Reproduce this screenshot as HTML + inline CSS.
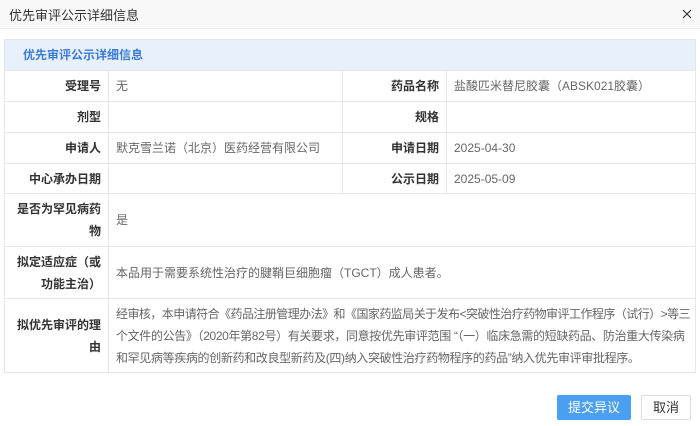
<!DOCTYPE html><html><head><meta charset="utf-8"><style>
body{margin:0;width:700px;height:426px;background:#fff;font-family:"Liberation Sans","Noto Sans CJK SC",sans-serif;font-size:12px;color:#666;position:relative;overflow:hidden}
.hd{position:absolute;left:0;top:0;width:700px;height:28px;background:#f8f8f8;border-bottom:1px solid #eee}
.hd span{position:absolute;left:9px;top:5px;font-size:13px;color:#333}
.hd svg{position:absolute;right:8px;top:9px}
table{position:absolute;left:4px;top:39px;width:692px;border-collapse:collapse;table-layout:fixed}
td{border:1px solid #e6e6e6;padding:0 7px;line-height:22px;vertical-align:middle;overflow:hidden}
td.l{text-align:right;font-weight:bold;color:#333;padding-right:7px}
tr.t td{background:#e8f0fb;color:#3a7bd5;font-weight:bold;height:30px;padding-left:18px}
.nw{white-space:nowrap;letter-spacing:-0.35px}
.nw span{letter-spacing:-0.55px}
.btn{position:absolute;top:395px;height:25px;line-height:25px;text-align:center;font-size:13px;border-radius:2px}
</style></head><body>
<div class="hd"><span>优先审评公示详细信息</span><svg width="10" height="10" viewBox="0 0 10 10"><path d="M1 1L9 9M9 1L1 9" stroke="#333" stroke-width="1.2"/></svg></div>
<table>
<col style="width:104px"><col style="width:234px"><col style="width:104px"><col>
<tr class="t"><td colspan="4">优先审评公示详细信息</td></tr>
<tr style="height:31px"><td class="l">受理号</td><td>无</td><td class="l">药品名称</td><td>盐酸匹米替尼胶囊（ABSK021胶囊）</td></tr>
<tr style="height:31px"><td class="l">剂型</td><td></td><td class="l">规格</td><td></td></tr>
<tr style="height:31px"><td class="l">申请人</td><td>默克雪兰诺（北京）医药经营有限公司</td><td class="l">申请日期</td><td>2025-04-30</td></tr>
<tr style="height:30px"><td class="l">中心承办日期</td><td></td><td class="l">公示日期</td><td>2025-05-09</td></tr>
<tr style="height:53px"><td class="l">是否为罕见病药物</td><td colspan="3">是</td></tr>
<tr style="height:52px"><td class="l">拟定适应症（或功能主治）</td><td colspan="3">本品用于需要系统性治疗的腱鞘巨细胞瘤（TGCT）成人患者。</td></tr>
<tr style="height:74px"><td class="l">拟优先审评的理由</td><td colspan="3" class="nw"><span>经审核，本申请符合《药品注册管理办法》和《国家药监局关于发布&lt;突破性治疗药物审评工作程序（试行）&gt;等三</span><br>个文件的公告》（2020年第82号）有关要求，同意按优先审评范围 “（一）临床急需的短缺药品、防治重大传染病<br>和罕见病等疾病的创新药和改良型新药及(四)纳入突破性治疗药物程序的药品”纳入优先审评审批程序。</td></tr>
</table>
<div class="btn" style="left:557px;width:74px;background:#4a9ff0;color:#fff">提交异议</div>
<div class="btn" style="left:641px;width:48px;border:1px solid #ddd;color:#333;height:23px;line-height:23px">取消</div>
</body></html>
